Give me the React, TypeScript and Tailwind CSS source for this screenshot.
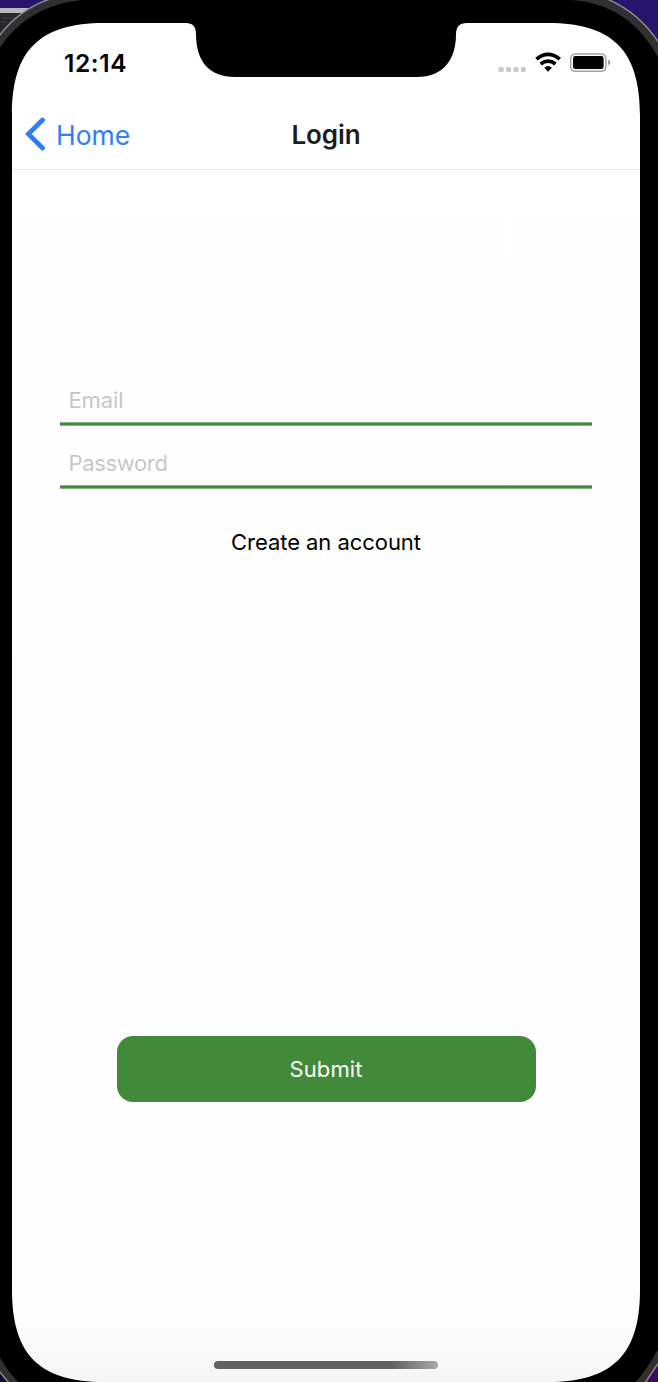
import React from "react";

function DeviceFrame() {
  return (
    <svg className="absolute inset-0 h-full w-full" viewBox="0 0 658 1382" aria-hidden="true">
      <defs>
        <linearGradient id="desk" x1="0" y1="0" x2="0" y2="1">
          <stop offset="0" stopColor="#27156d" />
          <stop offset="1" stopColor="#380f58" />
        </linearGradient>
        <linearGradient id="screen" x1="0" y1="0" x2="0" y2="1">
          <stop offset="0" stopColor="#ffffff" />
          <stop offset="0.95" stopColor="#fefefe" />
          <stop offset="1" stopColor="#f5f5f5" />
        </linearGradient>
      </defs>
      <rect width="658" height="1382" fill="url(#desk)" />
      <rect width="60" height="5" y="8" fill="#b9b9bb" />
      <rect width="60" height="30" y="13" fill="#28282c" />
      <path d="M2 18h19M1 22h5M10 22h5" stroke="#414145" strokeWidth="1" />
      <rect x="0" y="1360" width="30" height="22" fill="#140b2c" />
      <path d="M-1 36C12 19 29 6 50 -1H607C629 8 645 22 659 43V1362L645 1383H9L-1 1371Z" fill="#303032" stroke="#8b8b8b" strokeWidth="1.5" />
      <path d="M-1 49C17 22 43 4 82 0V-1H573V0C612 4 639 22 659 59V1347Q649 1367 635 1383H19Q8 1372 -1 1356Z" fill="#000" />
      <path
        d="M12 115C12 50 40 23 104 23H186Q196 23 196 34C196 61 209 77 235 77H417C443 77 456 60 456 34Q456 23 467 23H548C612 23 640 50 640 115V1290C640 1355 612 1382 548 1382H104C40 1382 12 1355 12 1290Z"
        fill="url(#screen)"
      />
    </svg>
  );
}

function StatusIcons() {
  return (
    <svg width="114" height="24" viewBox="0 0 114 24" aria-label="Wi-Fi connected, battery full">
      <g fill="#cacaca">
        <rect x="0.7" y="16.9" width="5" height="5" rx="1.5" />
        <rect x="8.1" y="16.9" width="5" height="5" rx="1.5" />
        <rect x="15.5" y="16.9" width="5" height="5" rx="1.5" />
        <rect x="22.9" y="16.9" width="5" height="5" rx="1.5" />
      </g>
      <g fill="none" stroke="#000" strokeWidth="3.7">
        <path d="M38.4 9.2Q50.1 -.5 61.8 9.2" />
        <path d="M42.7 14Q50.1 8.1 57.5 14" />
      </g>
      <path d="M46.3 17.8Q50.1 14.4 53.9 17.8L50.1 21.8Z" fill="#000" />
      <rect x="72.7" y="3.9" width="35.2" height="17.4" rx="4.8" fill="#fff" stroke="#a1a1a1" strokeWidth="1.5" />
      <rect x="75" y="6.1" width="30.6" height="13" rx="2.3" fill="#000" />
      <path d="M110.1 9.8Q112.4 10.5 112.4 12.5T110.1 15.3Z" fill="#999" />
    </svg>
  );
}

function Field({ label, type }: { label: string; type: string }) {
  return (
    <div className="h-[63px]">
      <input
        type={type}
        placeholder={label}
        aria-label={label}
        className="block h-11 w-full bg-transparent pl-[8.5px] text-[22px] tracking-[-0.1px] outline-none placeholder:text-[#c7c7c9] [&[type=password]]:tracking-[-0.35px]"
      />
      <div className="h-1 border-y border-[#83b57f] bg-[#418a3a]" />
    </div>
  );
}

export default function App() {
  return (
    <div className="relative h-[1382px] w-[658px] overflow-hidden font-['Inter','Liberation_Sans',sans-serif]">
      <DeviceFrame />
      <main className="relative ml-3 flex h-full w-[628px] flex-col">
        <header className="h-[170px] shrink-0 border-b border-[#ebebeb]">
          <div className="flex h-[100px] items-start justify-between pt-[50px] pr-[28px] pl-[52px]">
            <span className="pt-px text-[24.5px] leading-[25px] font-semibold tracking-[0.6px] text-black">12:14</span>
            <StatusIcons />
          </div>
          <nav className="grid h-[67px] grid-cols-[1fr_auto_1fr] items-center">
            <button className="flex items-center gap-[10px] pl-[13px] text-[26.5px] leading-8 text-[#2f7ef6]">
              <svg width="21" height="34" viewBox="0 0 21 34" fill="none" stroke="currentColor" strokeWidth="4.8" strokeLinecap="round">
                <path d="M17.5 3L3.3 17L17.5 31" />
              </svg>
              <span className="pt-[2px]">Home</span>
            </button>
            <h1 className="pt-[2px] text-[26px] leading-8 font-semibold tracking-[-0.1px] text-[#1c1c1e]">Login</h1>
          </nav>
        </header>
        <form className="flex flex-1 flex-col px-12 pt-[208px]" onSubmit={(event) => event.preventDefault()}>
          <div className="w-[532px]">
            <Field label="Email" type="email" />
            <Field label="Password" type="password" />
          </div>
          <button type="button" className="mt-[22px] self-center text-[22px] leading-8 tracking-[-0.05px] text-black">
            Create an account
          </button>
          <button className="mt-[478px] h-[66px] w-[419px] self-center rounded-[16px] bg-[#418a3a] text-[22px] tracking-[0.1px] text-white">
            Submit
          </button>
        </form>
        <div className="mb-[13px] ml-[202px] h-2 w-[224px] rounded-full bg-linear-to-r from-[#626262] from-80% to-[#aaaaaa]" />
      </main>
    </div>
  );
}
